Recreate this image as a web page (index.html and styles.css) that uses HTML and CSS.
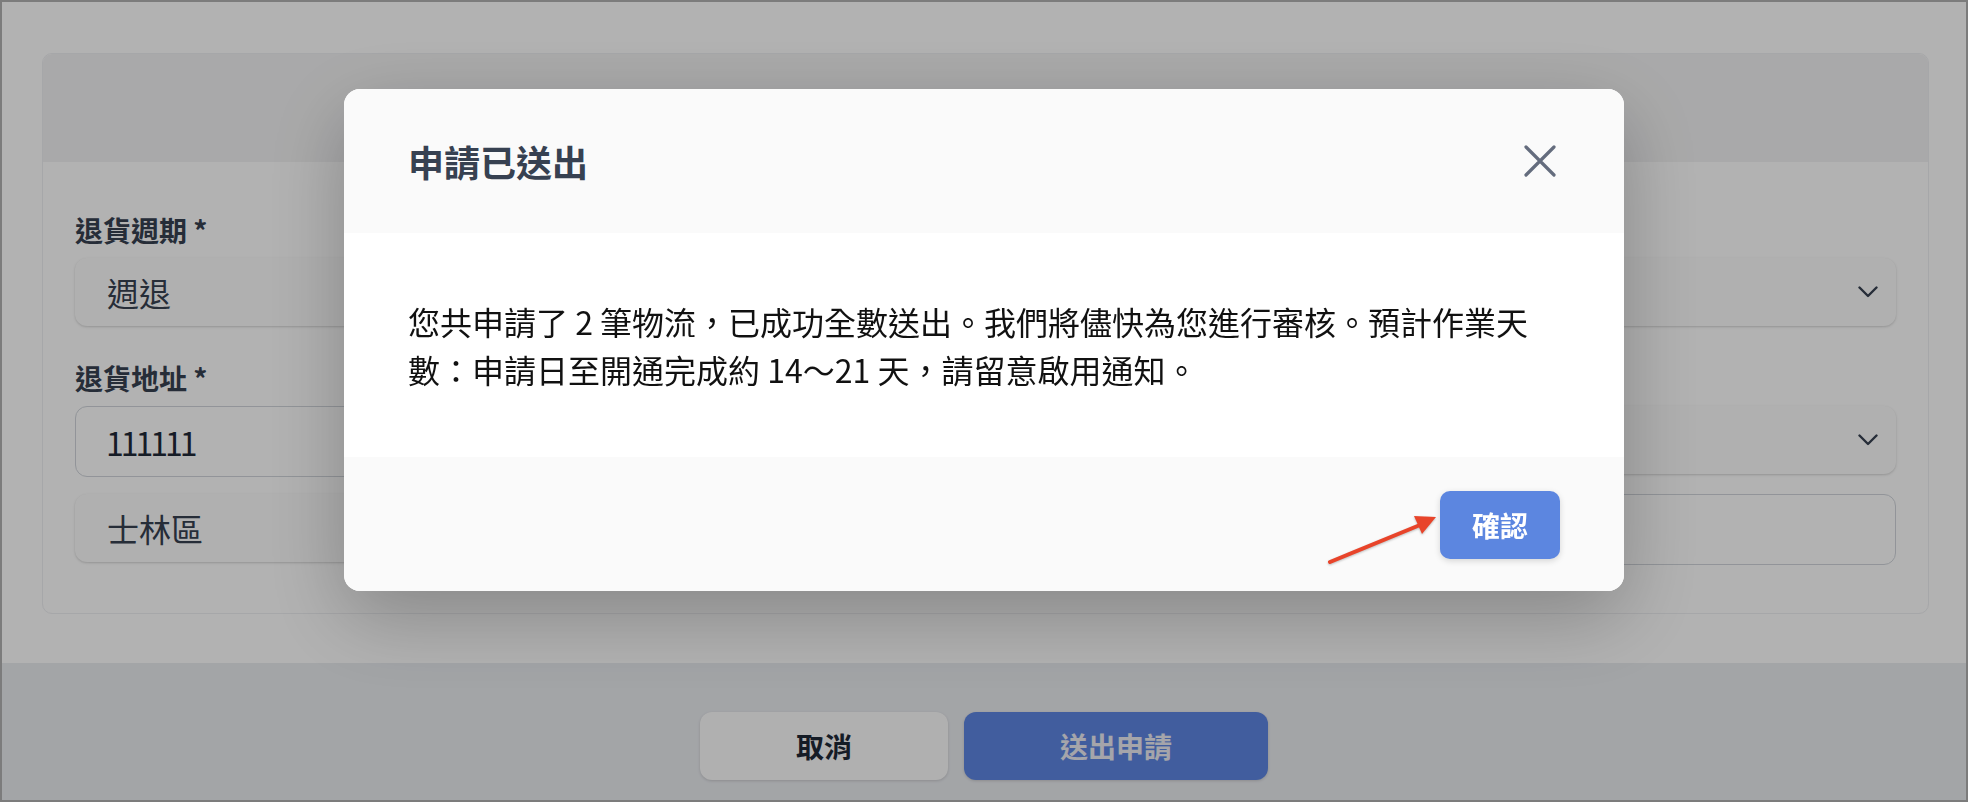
FILE: index.html
```html
<!DOCTYPE html>
<html lang="zh-Hant">

<head>
    <meta charset="UTF-8">
    <meta name="viewport" content="width=device-width, initial-scale=1.0">
    <title>退貨設定</title>
    <link rel="stylesheet" href="styles.css">
</head>

<body>

    <div class="frame">
        <main class="page">
            <section class="card">
                <div class="card-head"></div>
                <div class="card-body">
                    <!-- 退貨週期 -->
                    <div class="field">
                        <label class="label">退貨週期 *</label>
                        <div class="select">
                            <span>週退</span>
                            <svg class="chevron" width="20" height="12" viewBox="0 0 20 12">
                                <polyline points="1.5,1.5 10,10 18.5,1.5" />
                            </svg>
                        </div>
                    </div>

                    <!-- 退貨地址 -->
                    <div class="field">
                        <label class="label">退貨地址 *</label>
                        <div class="row">
                            <div class="input"><span class="zip">111111</span></div>
                            <div class="select">
                                <span></span>
                                <svg class="chevron" width="20" height="12" viewBox="0 0 20 12">
                                    <polyline points="1.5,1.5 10,10 18.5,1.5" />
                                </svg>
                            </div>
                        </div>
                        <div class="row">
                            <div class="select">
                                <span>士林區</span>
                            </div>
                            <div class="input"></div>
                        </div>
                    </div>
                </div>
            </section>
        </main>

        <footer class="actions">
            <button class="btn btn-cancel">取消</button>
            <button class="btn btn-submit">送出申請</button>
        </footer>
    </div>

    <!-- 送出後的確認視窗 -->
    <div class="overlay">
        <div class="modal">
            <div class="modal-head">
                <h2 class="modal-title">申請已送出</h2>
                <button class="modal-close">
                    <svg width="32" height="32" viewBox="0 0 32 32">
                        <path d="M2 2L30 30M30 2L2 30" />
                    </svg>
                </button>
            </div>
            <div class="modal-body">
                您共申請了 2 筆物流，已成功全數送出。我們將儘快為您進行審核。預計作業天數：申請日至開通完成約 14～21 天，請留意啟用通知。
            </div>
            <div class="modal-foot">
                <button class="btn btn-confirm">確認</button>
            </div>
        </div>

        <svg class="pointer" width="130" height="70" viewBox="0 0 130 70">
            <line x1="10" y1="57" x2="100" y2="20" />
            <polygon points="116,12 94,11 102,29" />
        </svg>
    </div>

</body>

</html>
```

FILE: styles.css
```css
* {
    box-sizing: border-box;
}

html,
body {
    margin: 0;
    height: 100%;
}

body {
    font-family: "Noto Sans CJK TC", "Noto Sans", sans-serif;
    color: #374151;
    background: #fff;
}

.frame {
    height: 802px;
    border: 2px solid #b2b2b2;
    display: flex;
    flex-direction: column;
    background: #fff;
}

.page {
    flex: 1;
    padding: 51px 37px 0 40px;
}

.card {
    border: 1px solid #eeeff2;
    border-radius: 10px;
    overflow: hidden;
    background: #fff;
}

.card-head {
    height: 108px;
    background: #f3f3f4;
}

.card-body {
    padding: 48px 32px;
}

.field + .field {
    margin-top: 32px;
}

.label {
    display: block;
    font-size: 28px;
    line-height: 40px;
    font-weight: 700;
    color: #374151;
    margin-bottom: 8px;
}

.select {
    height: 68px;
    border-radius: 12px;
    background: #fcfcfc;
    box-shadow: 0 1px 3px rgba(0, 0, 0, 0.12), 0 1px 2px rgba(0, 0, 0, 0.06);
    display: flex;
    align-items: center;
    justify-content: space-between;
    padding: 0 18px 0 32px;
    font-size: 32px;
    color: #374151;
}

.chevron polyline {
    fill: none;
    stroke: #374151;
    stroke-width: 2.4;
    stroke-linecap: round;
    stroke-linejoin: round;
}

.input {
    height: 71px;
    border: 1.5px solid #d1d5db;
    border-radius: 12px;
    padding: 0 30px;
    display: flex;
    align-items: center;
    font-size: 32px;
    color: #1f2937;
}

.zip {
    letter-spacing: -3px;
}

.row {
    display: grid;
    grid-template-columns: 1fr 2fr;
    gap: 16px;
    align-items: start;
}

.row + .row {
    margin-top: 17px;
}

.actions {
    height: 137px;
    background: #eaecf0;
    display: flex;
    justify-content: center;
    gap: 16px;
    padding-top: 49px;
}

.btn {
    height: 68px;
    border: 0;
    border-radius: 12px;
    font-family: inherit;
    font-size: 28px;
    font-weight: 700;
    cursor: pointer;
}

.btn-cancel {
    width: 248px;
    background: #fcfcfc;
    color: #1f2937;
    box-shadow: 0 1px 3px rgba(0, 0, 0, 0.15);
}

.btn-submit {
    width: 304px;
    background: #5d86e2;
    color: #ececf4;
    box-shadow: 0 1px 3px rgba(0, 0, 0, 0.15);
}

/* modal */

.overlay {
    position: fixed;
    inset: 0;
    background: rgba(0, 0, 0, 0.3);
    display: flex;
    justify-content: center;
    align-items: flex-start;
    padding-top: 89px;
}

.modal {
    width: 1280px;
    border-radius: 16px;
    overflow: hidden;
    background: #fff;
    box-shadow: 0 25px 80px rgba(0, 0, 0, 0.25);
}

.modal-head {
    height: 144px;
    background: #fafafa;
    display: flex;
    align-items: center;
    justify-content: space-between;
    padding: 0 68px 0 64px;
}

.modal-title {
    margin: 0;
    font-size: 36px;
    font-weight: 700;
    color: #374151;
}

.modal-close {
    width: 32px;
    height: 32px;
    padding: 0;
    border: 0;
    background: none;
    cursor: pointer;
}

.modal-close path {
    stroke: #646c7d;
    stroke-width: 3.2;
    stroke-linecap: round;
}

.modal-body {
    padding: 64px;
    font-size: 32px;
    line-height: 48px;
    color: #111;
}

.modal-foot {
    background: #fafafa;
    padding: 34px 64px 32px;
    display: flex;
    justify-content: flex-end;
}

.btn-confirm {
    width: 120px;
    border-radius: 10px;
    background: #5c86e0;
    color: #fff;
    box-shadow: 0 2px 6px rgba(0, 0, 0, 0.15);
}

.pointer {
    position: absolute;
    left: 1320px;
    top: 505px;
    filter: drop-shadow(0 1px 1px rgba(0, 0, 0, 0.25));
}

.pointer line {
    stroke: #e8442a;
    stroke-width: 4;
    stroke-linecap: round;
}

.pointer polygon {
    fill: #e8442a;
}
```
